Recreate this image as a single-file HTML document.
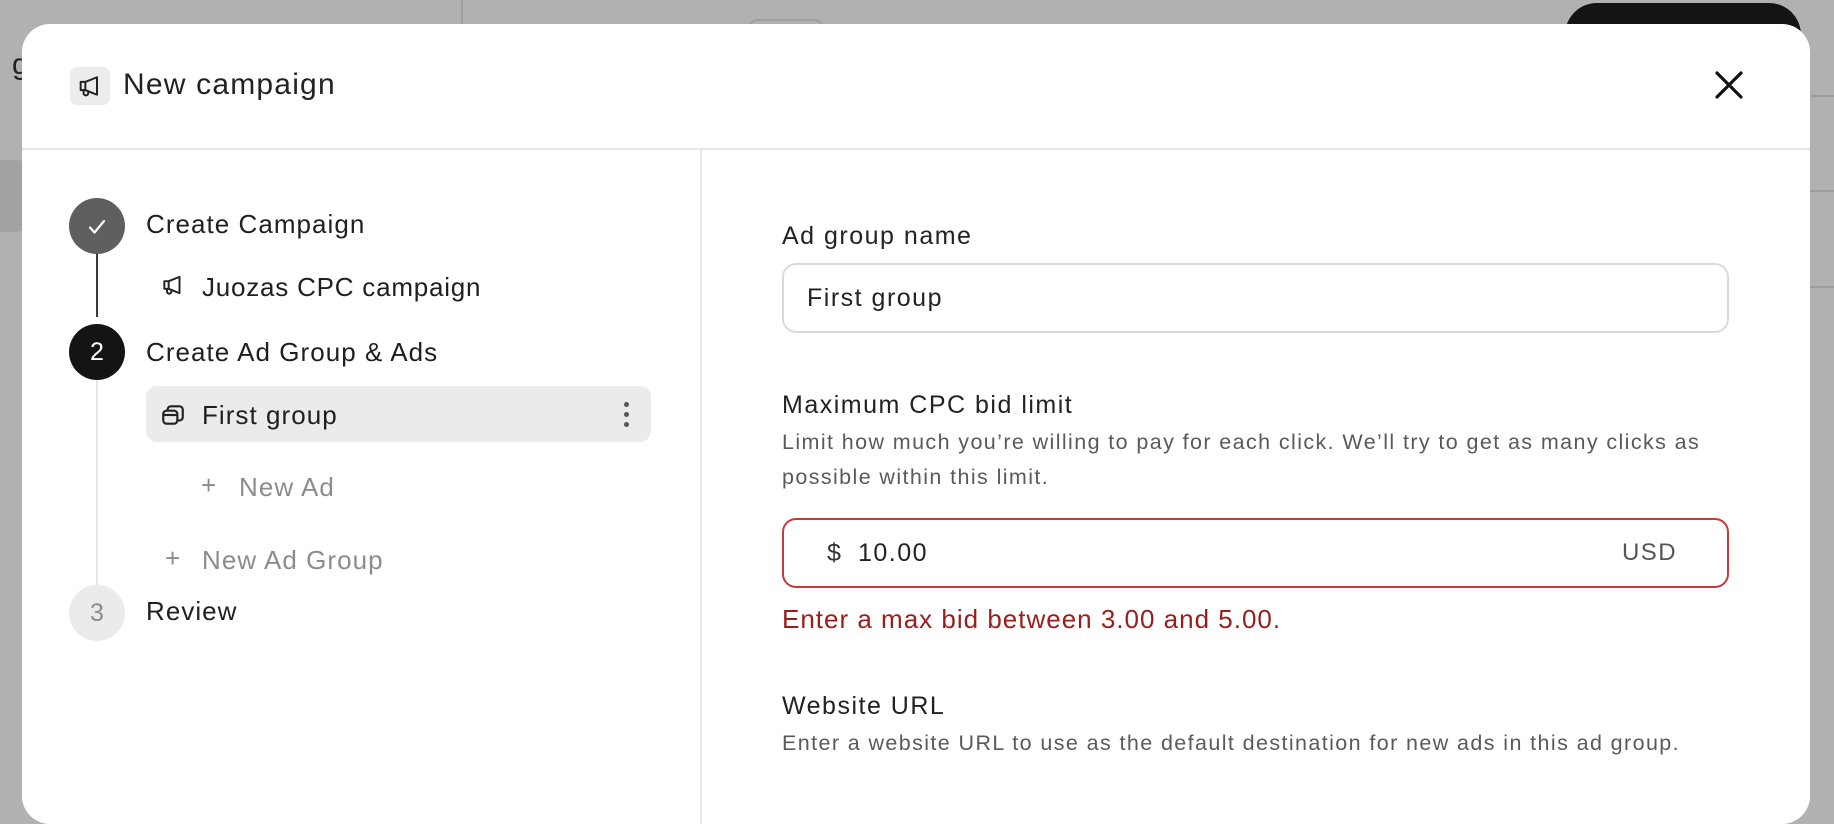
<!DOCTYPE html>
<html><head><meta charset="utf-8"><style>
*{box-sizing:border-box;margin:0;padding:0}
html,body{width:1834px;height:784px;overflow:hidden;background:#b1b1b1;font-family:"Liberation Sans",sans-serif;color:#1f1f1f}
.abs{position:absolute}
.modal{position:absolute;left:22px;top:24px;width:1788px;height:800px;background:#fff;border-radius:28px;overflow:hidden}
.t{position:absolute;white-space:nowrap;line-height:1}
.w{letter-spacing:0.04em}
.w2{letter-spacing:0.06em}
.d{font-size:21.5px;letter-spacing:0.065em;color:#5a5a5a}
</style></head><body>
<div class="abs" style="left:461px;top:0;width:2px;height:24px;background:#9e9e9e"></div>
<div class="abs" style="left:748px;top:19px;width:76px;height:20px;border:2px solid #9d9d9d;border-radius:10px 10px 0 0;border-bottom:none"></div>
<div class="abs" style="left:1565px;top:3px;width:236px;height:60px;background:#141414;border-radius:32px 32px 0 0"></div>
<div class="abs" style="left:1810px;top:95px;width:24px;height:2px;background:#9c9c9c"></div>
<div class="abs" style="left:1810px;top:190px;width:24px;height:2px;background:#9c9c9c"></div>
<div class="abs" style="left:1810px;top:286px;width:24px;height:2px;background:#9c9c9c"></div>
<div class="abs" style="left:0;top:160px;width:30px;height:72px;background:#a3a3a3;border-radius:0 14px 14px 0"></div>
<div class="t" style="left:12px;top:50px;font-size:30px;color:#222">g</div>

<div class="modal">
  <div class="abs" style="left:48px;top:43px;width:40px;height:38px;background:#ececec;border-radius:7px"></div>
  <svg class="abs" style="left:54px;top:48px" width="28" height="28" viewBox="0 0 24 24" fill="none" stroke="#222" stroke-width="1.7" stroke-linejoin="round" stroke-linecap="round"><path d="M4 8.5h4l10-4v15l-10-4H4z"/><path d="M8 8.5v7"/><path d="M6.5 15.5v2.5a2 2 0 0 0 4 0v-1.5"/></svg>
  <div class="t w" style="left:101px;top:46px;font-size:30px;color:#222">New campaign</div>
  <svg class="abs" style="left:1692px;top:46px" width="30" height="30" viewBox="0 0 30 30" stroke="#111" stroke-width="3.2" stroke-linecap="round"><path d="M3 3L27 27M27 3L3 27"/></svg>
  <div class="abs" style="left:0;top:124px;width:100%;height:2px;background:#e6e6e6"></div>
  <div class="abs" style="left:678px;top:126px;width:2px;height:700px;background:#e8e8e8"></div>

  <div class="abs" style="left:74px;top:230px;width:2px;height:63px;background:#3a3a3a"></div>
  <div class="abs" style="left:74px;top:356px;width:2px;height:230px;background:#e6e6e6"></div>
  <div class="abs" style="left:47px;top:174px;width:56px;height:56px;border-radius:50%;background:#5f5f5f"></div>
  <svg class="abs" style="left:64px;top:192px" width="22" height="22" viewBox="0 0 22 22" fill="none" stroke="#fff" stroke-width="2.2" stroke-linecap="round" stroke-linejoin="round"><path d="M4 11.5l4.5 5L18 5"/></svg>
  <div class="t w" style="left:124px;top:187px;font-size:26px">Create Campaign</div>
  <svg class="abs" style="left:138px;top:248px" width="26" height="26" viewBox="0 0 24 24" fill="none" stroke="#222" stroke-width="1.8" stroke-linejoin="round" stroke-linecap="round"><path d="M4 8.5h4l10-4v15l-10-4H4z"/><path d="M8 8.5v7"/><path d="M6.5 15.5v2.5a2 2 0 0 0 4 0v-1.5"/></svg>
  <div class="t" style="left:180px;top:250px;font-size:26px;letter-spacing:0.03em">Juozas CPC campaign</div>

  <div class="abs" style="left:47px;top:300px;width:56px;height:56px;border-radius:50%;background:#141414;color:#fff;font-size:25px;text-align:center;line-height:56px">2</div>
  <div class="t w" style="left:124px;top:315px;font-size:26px">Create Ad Group &amp; Ads</div>
  <div class="abs" style="left:124px;top:362px;width:505px;height:56px;background:#ebebeb;border-radius:11px"></div>
  <svg class="abs" style="left:138px;top:378px" width="26" height="26" viewBox="0 0 24 24" fill="none" stroke="#222" stroke-width="2" stroke-linejoin="round"><rect x="3" y="8" width="13" height="12" rx="3"/><path d="M3 12h13"/><path d="M7 8V7a3 3 0 0 1 3-3h8a3 3 0 0 1 3 3v7a3 3 0 0 1-3 3h-2"/></svg>
  <div class="t w" style="left:180px;top:378px;font-size:26px">First group</div>
  <div class="abs" style="left:602px;top:378px;width:5px;height:5px;border-radius:50%;background:#555"></div>
  <div class="abs" style="left:602px;top:388px;width:5px;height:5px;border-radius:50%;background:#555"></div>
  <div class="abs" style="left:602px;top:398px;width:5px;height:5px;border-radius:50%;background:#555"></div>

  <div class="t" style="left:179px;top:448px;font-size:26px;color:#8c8c8c">+</div>
  <div class="t w" style="left:217px;top:450px;font-size:26px;color:#8c8c8c">New Ad</div>
  <div class="t" style="left:143px;top:521px;font-size:26px;color:#8c8c8c">+</div>
  <div class="t w" style="left:180px;top:523px;font-size:26px;color:#8c8c8c">New Ad Group</div>

  <div class="abs" style="left:47px;top:561px;width:56px;height:56px;border-radius:50%;background:#ebebeb;color:#8c8c8c;font-size:25px;text-align:center;line-height:56px">3</div>
  <div class="t w" style="left:124px;top:574px;font-size:26px">Review</div>

  <div class="t w2" style="left:760px;top:200px;font-size:25px;color:#222">Ad group name</div>
  <div class="abs" style="left:760px;top:239px;width:947px;height:70px;border:2px solid #dadada;border-radius:14px"></div>
  <div class="t w2" style="left:785px;top:262px;font-size:25px;color:#222">First group</div>

  <div class="t w2" style="left:760px;top:369px;font-size:25px;color:#222">Maximum CPC bid limit</div>
  <div class="t d" style="left:760px;top:408px">Limit how much you’re willing to pay for each click. We’ll try to get as many clicks as</div>
  <div class="t d" style="left:760px;top:443px">possible within this limit.</div>
  <div class="abs" style="left:760px;top:494px;width:947px;height:70px;border:2px solid #c53a3a;border-radius:14px"></div>
  <div class="t" style="left:805px;top:517px;font-size:25px;color:#333">$</div>
  <div class="t w2" style="left:836px;top:517px;font-size:25px;color:#222">10.00</div>
  <div class="t w2" style="left:1600px;top:517px;font-size:24px;color:#555">USD</div>
  <div class="t" style="left:760px;top:582px;font-size:26px;letter-spacing:1px;color:#9b1c1c">Enter a max bid between 3.00 and 5.00.</div>

  <div class="t w2" style="left:760px;top:670px;font-size:25px;color:#222">Website URL</div>
  <div class="t d" style="left:760px;top:709px">Enter a website URL to use as the default destination for new ads in this ad group.</div>
</div>
</body></html>
